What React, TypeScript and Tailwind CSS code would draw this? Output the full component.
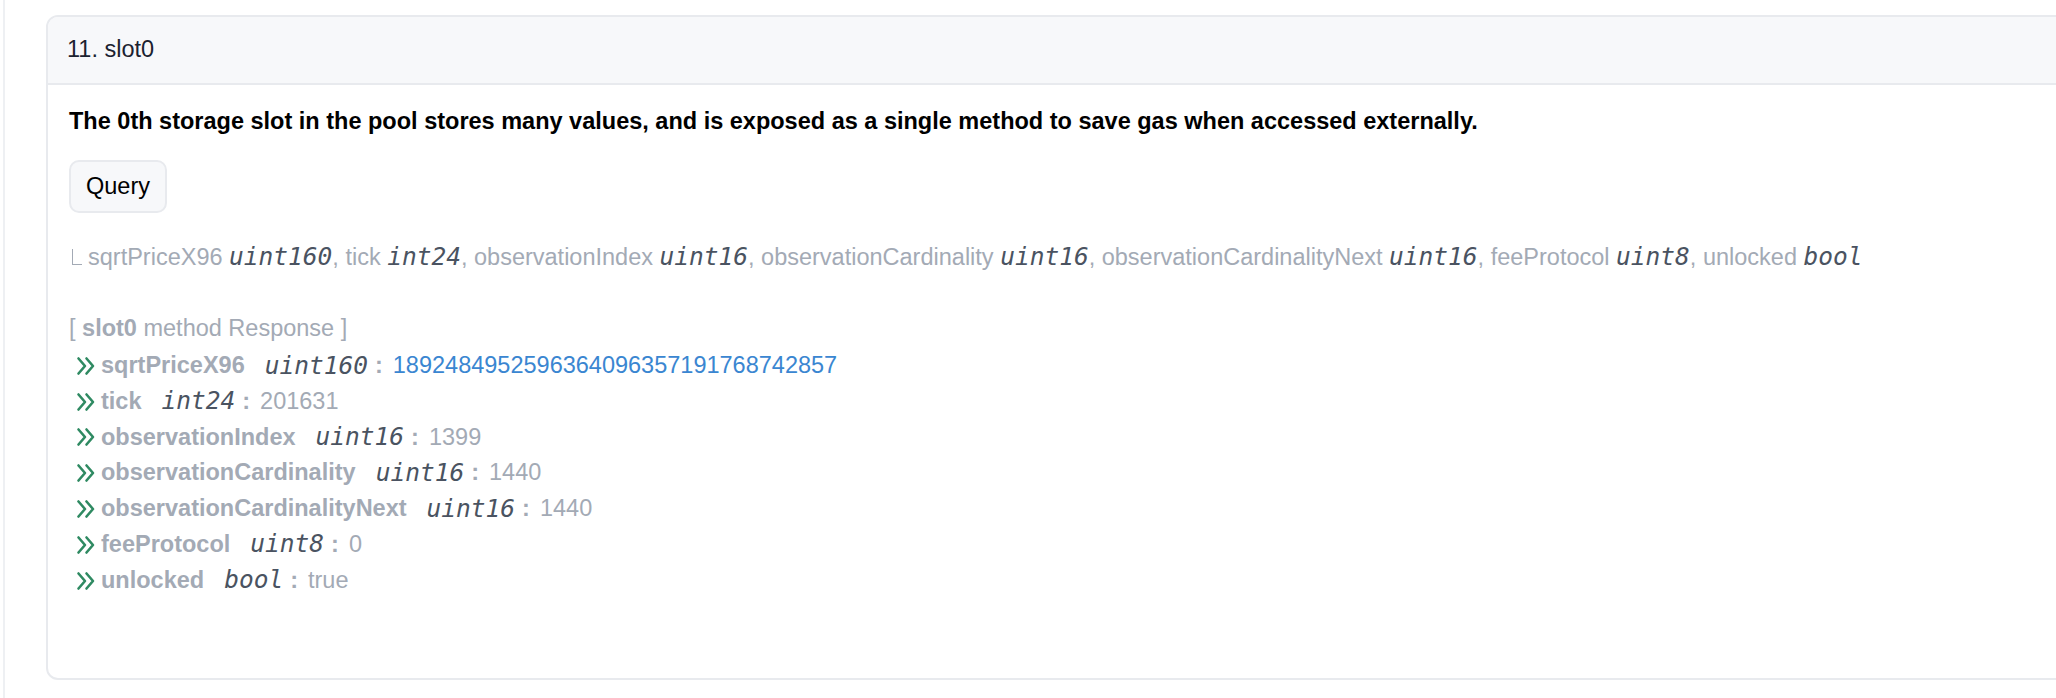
const sans = { fontFamily: '"Liberation Sans", Arial, sans-serif' };

const fields = [
  { name: "sqrtPriceX96", type: "uint160", value: "1892484952596364096357191768742857", link: true },
  { name: "tick", type: "int24", value: "201631" },
  { name: "observationIndex", type: "uint16", value: "1399" },
  { name: "observationCardinality", type: "uint16", value: "1440" },
  { name: "observationCardinalityNext", type: "uint16", value: "1440" },
  { name: "feeProtocol", type: "uint8", value: "0" },
  { name: "unlocked", type: "bool", value: "true" },
];

function Type({ children }: { children: string }) {
  return (
    <span className="font-['DejaVu_Sans_Mono',monospace] italic text-[24.5px] text-[#4a5361]">
      {children}
    </span>
  );
}

function Chevrons() {
  return (
    <svg width="19" height="22" viewBox="0 0 19 22" fill="none" className="shrink-0">
      <path
        d="M2.5 3.5 L9 11 L2.5 18.5 M10.5 3.5 L17 11 L10.5 18.5"
        stroke="#2f8a62"
        strokeWidth="2.6"
        strokeLinecap="round"
        strokeLinejoin="round"
      />
    </svg>
  );
}

export default function App() {
  return (
    <div className="min-h-screen overflow-hidden bg-white pl-[3px]" style={sans}>
      <div className="min-h-[698px] border-l-2 border-[#eef0f3] pl-[41px] pt-[15px]">
        <div className="w-[2100px] h-[665px] rounded-l-[12px] border-2 border-[#e8eaee] overflow-hidden">
          {/* header */}
          <div className="h-[68px] flex items-center px-[19px] bg-[#f7f8fa] border-b-2 border-[#e8eaee] text-[23.5px] text-[#1b2230]">
            11. slot0
          </div>

          <div className="pl-[21px] pt-[19px]">
            <p className="text-[23.5px] leading-[34px] font-bold text-black">
              The 0th storage slot in the pool stores many values, and is exposed as a single method to save gas when accessed externally.
            </p>

            <button className="mt-[22px] h-[53px] px-[15px] rounded-[10px] border-2 border-[#e8eaee] bg-[#f7f8fa] text-[23.5px] text-black">
              Query
            </button>

            {/* signature */}
            <div className="mt-[28px] flex items-center text-[23.5px] leading-[32px] text-[#a3aab5]">
              <span className="inline-block ml-[3px] w-[10px] h-[16px] border-l-[1.5px] border-b-[1.5px] border-[#a3aab5] mr-[6px]" />
              <span>
                sqrtPriceX96 <Type>uint160</Type>, tick <Type>int24</Type>, observationIndex <Type>uint16</Type>,
                observationCardinality <Type>uint16</Type>, observationCardinalityNext <Type>uint16</Type>, feeProtocol{" "}
                <Type>uint8</Type>, unlocked <Type>bool</Type>
              </span>
            </div>

            {/* response */}
            <div className="mt-[36px] text-[23.5px] text-[#a3aab5]">
              <div className="h-[39px] leading-[39px]">
                [ <span className="font-bold">slot0</span> method Response ]
              </div>
              {fields.map((f) => (
                <div key={f.name} className="flex items-center h-[35.8px] leading-[35.8px] pl-[7px]">
                  <Chevrons />
                  <span className="font-bold ml-[6px]">{f.name}</span>
                  <span className="ml-[20px]">
                    <Type>{f.type}</Type>
                  </span>
                  <span className="font-bold ml-[7px] mr-[10px]">:</span>
                  <span className={f.link ? "text-[#3a86d1]" : ""}>{f.value}</span>
                </div>
              ))}
            </div>
          </div>
        </div>
      </div>
    </div>
  );
}
